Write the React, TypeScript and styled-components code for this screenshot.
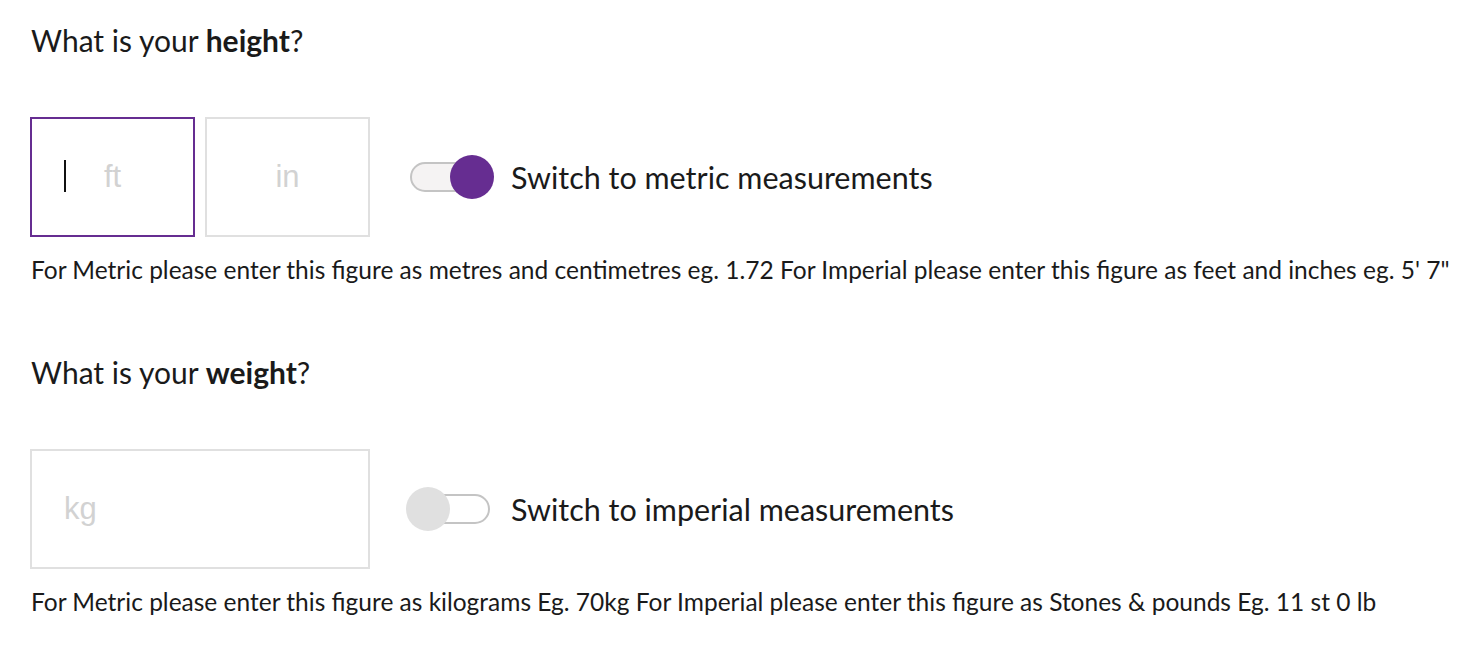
import React from 'react';
import styled, { createGlobalStyle } from 'styled-components';

const purple = '#662d91';

// Global reset, the page is plain white
const GlobalStyle = createGlobalStyle`
  html, body {
    margin: 0;
    padding: 0;
    background: #ffffff;
  }
  body {
    font-family: Lato, 'Noto Sans', sans-serif;
    color: #1a1a1a;
  }
`;

const Page = styled.main`
  padding: 22px 30px 0;
`;

const Section = styled.section`
  & + & {
    margin-top: 69px;
  }
`;

const Question = styled.h2`
  margin: 0;
  font-size: 30px;
  line-height: 36px;
  font-weight: 400;
  padding-left: 1px;

  strong {
    font-weight: 700;
  }
`;

const FieldRow = styled.div`
  display: flex;
  align-items: center;
  margin-top: 59px;
`;

const Inputs = styled.div`
  display: flex;
  gap: 10px;
`;

const BoxWrap = styled.div`
  position: relative;
`;

const Box = styled.input<{ $width: number; $focused?: boolean; $center?: boolean }>`
  box-sizing: border-box;
  width: ${(p) => p.$width}px;
  height: 120px;
  border: 2px solid ${(p) => (p.$focused ? purple : '#e0e0e0')};
  border-radius: 0;
  padding: 0 32px;
  outline: none;
  background: #fff;
  font-family: 'Liberation Sans', Arial, sans-serif;
  font-size: 31px;
  text-align: ${(p) => (p.$center ? 'center' : 'left')};
  color: #222;

  &::placeholder {
    color: #d2d2d2;
  }
`;

// fake caret drawn over the focused box
const Caret = styled.span`
  position: absolute;
  left: 34px;
  top: 43px;
  width: 2px;
  height: 32px;
  background: #111;
`;

const Toggle = styled.div`
  display: flex;
  align-items: center;
  margin-left: 40px;
  gap: 21px;
`;

const Track = styled.div<{ $on: boolean }>`
  position: relative;
  box-sizing: border-box;
  width: 80px;
  height: 30px;
  border: 2px solid #c4c4c4;
  border-radius: 15px;
  background: ${(p) => (p.$on ? '#f5f3f3' : '#ffffff')};
`;

const Knob = styled.span<{ $on: boolean }>`
  position: absolute;
  top: -9px;
  left: ${(p) => (p.$on ? '38px' : '-6px')};
  width: 44px;
  height: 44px;
  border-radius: 50%;
  background: ${(p) => (p.$on ? purple : '#e0e0e0')};
`;

const ToggleLabel = styled.span`
  font-size: 30.5px;
  line-height: 36px;
`;

const Help = styled.p`
  margin: 18px 0 0;
  padding-left: 1px;
  font-size: 24.5px;
  line-height: 30px;
  white-space: nowrap;
`;

function Switch({ on, label }: { on: boolean; label: string }) {
  return (
    <Toggle>
      <Track $on={on}>
        <Knob $on={on} />
      </Track>
      <ToggleLabel>{label}</ToggleLabel>
    </Toggle>
  );
}

export default function App() {
  return (
    <>
      <GlobalStyle />
      <Page>
        <Section>
          <Question>
            What is your <strong>height</strong>?
          </Question>
          <FieldRow>
            <Inputs>
              <BoxWrap>
                <Box $width={165} $focused $center placeholder="ft" />
                <Caret />
              </BoxWrap>
              <BoxWrap>
                <Box $width={165} $center placeholder="in" />
              </BoxWrap>
            </Inputs>
            <Switch on label="Switch to metric measurements" />
          </FieldRow>
          <Help>
            For Metric please enter this figure as metres and centimetres eg. 1.72 For Imperial please enter this
            figure as feet and inches eg. 5' 7"
          </Help>
        </Section>
        <Section>
          <Question>
            What is your <strong>weight</strong>?
          </Question>
          <FieldRow>
            <Inputs>
              <BoxWrap>
                <Box $width={340} placeholder="kg" />
              </BoxWrap>
            </Inputs>
            <Switch on={false} label="Switch to imperial measurements" />
          </FieldRow>
          <Help>
            For Metric please enter this figure as kilograms Eg. 70kg For Imperial please enter this figure as Stones
            &amp; pounds Eg. 11 st 0 lb
          </Help>
        </Section>
      </Page>
    </>
  );
}
